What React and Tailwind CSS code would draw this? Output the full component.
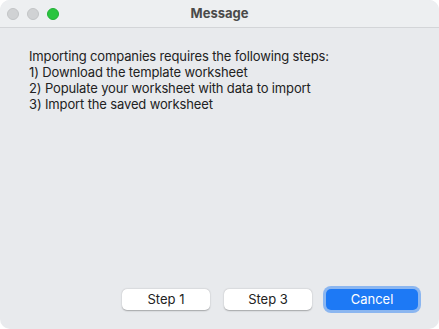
export default function App() {
  const font = { fontFamily: '"Inter", "Liberation Sans", sans-serif' };
  return (
    <div className="w-[439px] h-[329px] bg-white" style={font}>
      <div className="w-[439px] h-[329px] rounded-[10px] overflow-hidden bg-[#e8eaed] flex flex-col">
        <div className="h-[28px] shrink-0 relative flex items-center justify-center bg-[#edeff1] border-b border-[#d3d5d8]">
          <div className="absolute left-[7px] top-[8px] flex gap-[8px]">
            <div className="w-[12px] h-[12px] rounded-full bg-[#d0d2d4] border border-[#c2c4c6]" />
            <div className="w-[12px] h-[12px] rounded-full bg-[#d0d2d4] border border-[#c2c4c6]" />
            <div className="w-[12px] h-[12px] rounded-full bg-[#2ac53f] border border-[#22b036]" />
          </div>
          <span className="text-[13px] font-bold text-[#4a4a4a]">Message</span>
        </div>
        <div className="flex-1 flex flex-col px-[29px] pt-[20px]">
          <div className="text-[13px] leading-[16px] text-[#222] tracking-[-0.14px]">
            <div>Importing companies requires the following steps:</div>
            <div>1) Download the template worksheet</div>
            <div>2) Populate your worksheet with data to import</div>
            <div>3) Import the saved worksheet</div>
          </div>
        </div>
        <div className="flex justify-end items-center gap-[14px] pr-[21px] pb-[19px]">
          <button className="w-[88px] h-[21px] rounded-[5px] bg-white text-[13px] text-[#222] shadow-[0_0.5px_1.5px_rgba(0,0,0,0.3)]">Step 1</button>
          <button className="w-[88px] h-[21px] rounded-[5px] bg-white text-[13px] text-[#222] shadow-[0_0.5px_1.5px_rgba(0,0,0,0.3)]">Step 3</button>
          <button className="w-[92px] h-[21px] rounded-[5px] bg-[#1d79f5] text-[13px] text-white shadow-[0_0_0_3px_#8bb6f0]">Cancel</button>
        </div>
      </div>
    </div>
  );
}
